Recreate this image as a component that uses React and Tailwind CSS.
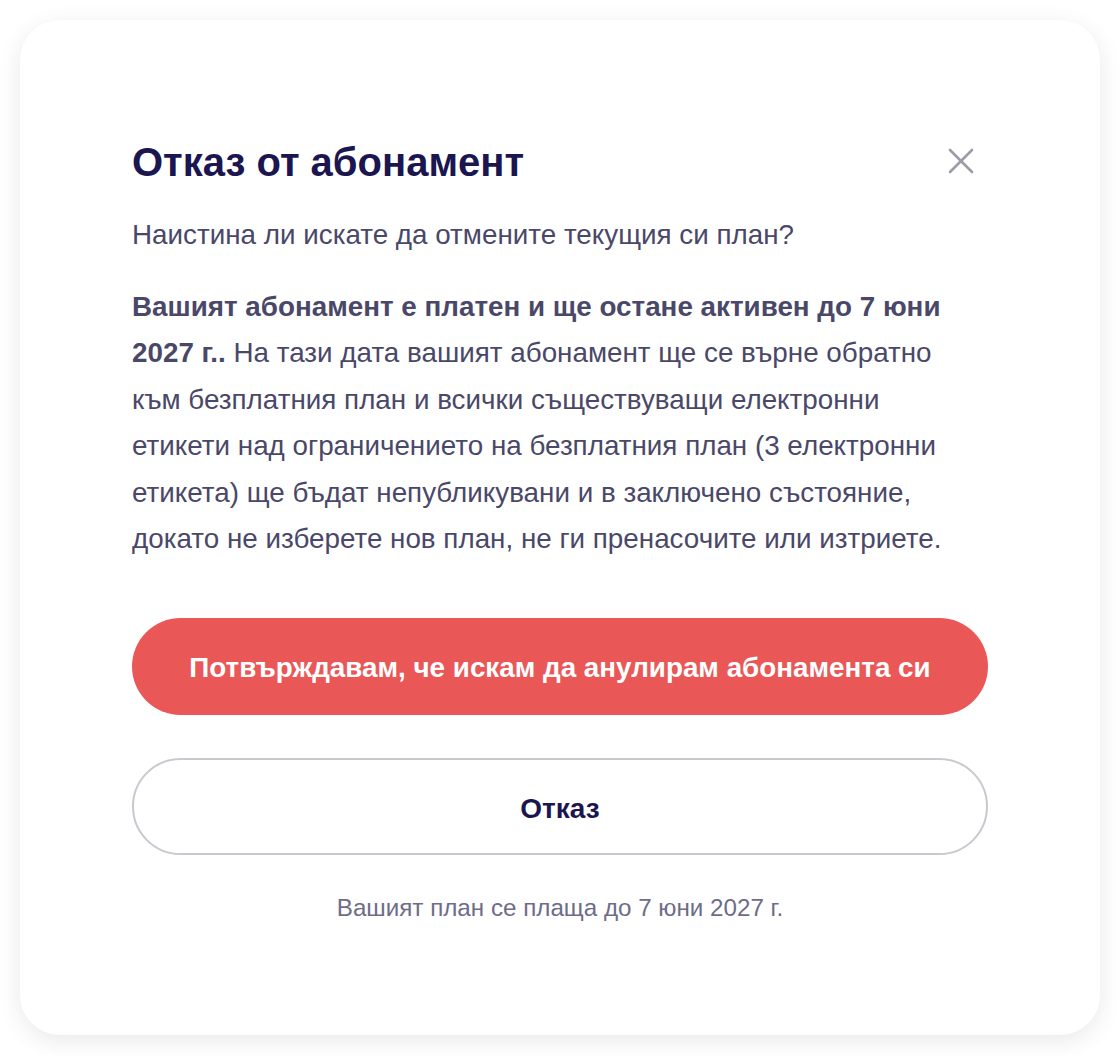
import React from "react";

export default function App() {
  return (
    <div
      className="w-[1120px] h-[1056px] bg-white p-[20px]"
      style={{ fontFamily: '"Liberation Sans", Arial, Helvetica, sans-serif' }}
    >
      <div className="h-[1015px] w-[1080px] rounded-[40px] bg-white shadow-[0_6px_24px_rgba(0,0,0,0.09)] px-[112px] pt-[118px] flex flex-col">
        <div className="flex items-center justify-between">
          <h1 className="text-[40px] leading-[48px] font-bold text-[#1b1650]">Отказ от абонамент</h1>
          <button className="w-[30px] h-[30px] flex items-center justify-center mr-[12px] mt-[-2px]" aria-label="close">
            <svg width="26" height="26" viewBox="0 0 26 26" fill="none">
              <path d="M2 2L24 24M24 2L2 24" stroke="#9c9ba8" strokeWidth="2.6" strokeLinecap="round" />
            </svg>
          </button>
        </div>
        <p className="mt-[26px] text-[27.8px] leading-[46.5px] text-[#4a4868]">
          Наистина ли искате да отмените текущия си план?
        </p>
        <p className="mt-[25px] text-[27.8px] leading-[46.5px] text-[#4a4868]">
          <b className="font-bold">Вашият абонамент е платен и ще остане активен до 7 юни<br />2027 г..</b> На тази дата вашият абонамент ще се върне обратно<br />към безплатния план и всички съществуващи електронни<br />етикети над ограничението на безплатния план (3 електронни<br />етикета) ще бъдат непубликувани и в заключено състояние,<br />докато не изберете нов план, не ги пренасочите или изтриете.
        </p>
        <button className="mt-[55px] h-[97px] w-full rounded-full bg-[#ea5757] text-white text-[27.8px] font-bold pt-[4px]">
          Потвърждавам, че искам да анулирам абонамента си
        </button>
        <button className="mt-[43px] h-[97px] w-full rounded-full border-2 border-[#c9c8cf] bg-white text-[#1b1650] text-[28px] font-bold pt-[6px]">
          Отказ
        </button>
        <p className="mt-[35px] text-center text-[24.2px] leading-[36px] text-[#6e6c88]">
          Вашият план се плаща до 7 юни 2027 г.
        </p>
      </div>
    </div>
  );
}
